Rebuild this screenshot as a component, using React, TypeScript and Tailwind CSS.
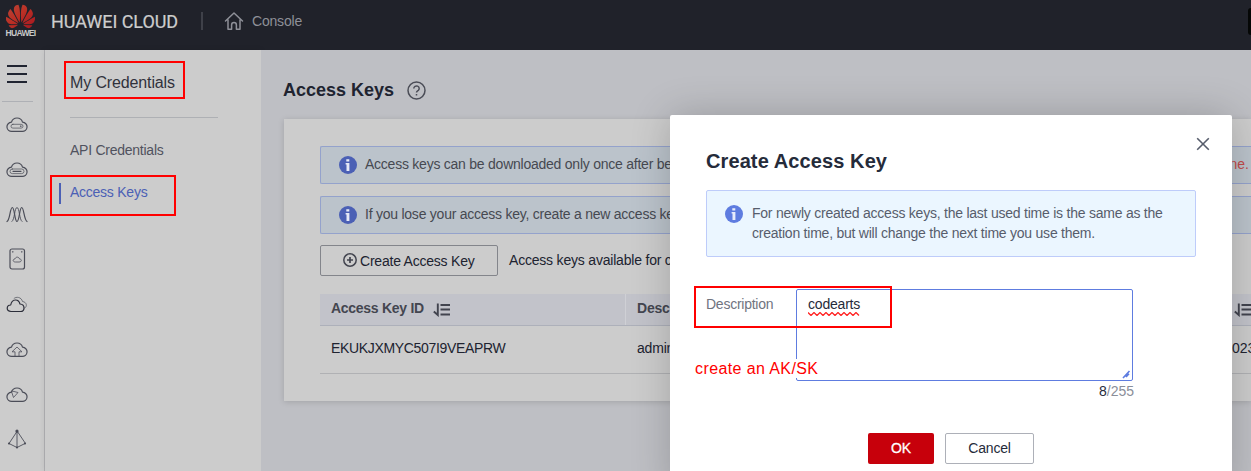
import React from "react";
import { SiHuawei } from "react-icons/si";

const CLOUD = "M6 15.4A4.8 4.6 0 0 1 5.5 6.2A5.7 5.7 0 0 1 16.5 6.2A4.8 4.6 0 0 1 16 15.4Z";

function RailIcon({ children }: { children: React.ReactNode }) {
  return (
    <div className="flex h-[45px] w-full items-center pl-[6px]">
      <svg className="overflow-visible" width="22" height="22" viewBox="0 -3 22 22" fill="none" stroke="#4b4d58" strokeWidth="1.2" strokeLinejoin="round" strokeLinecap="round">
        {children}
      </svg>
    </div>
  );
}

function Info({ color }: { color: string }) {
  return (
    <svg className="shrink-0" width="18" height="18" viewBox="0 0 18 18">
      <circle cx="9" cy="9" r="9" fill={color} />
      <path d="M7.3 3.3h3v2.3h-3zM6.6 7h3.8v8H7.5V8.6h-.9z" fill="#fff" fillOpacity=".86" />
    </svg>
  );
}

function SortIcon() {
  return (
    <svg width="18" height="14" viewBox="0 0 18 14" fill="none" stroke="#42444f" strokeWidth="1.9">
      <path d="M4.800 .5V12L.8 8.500M7.500 2h9.500M7.500 6.500h9.500M7.500 11.500h9.500" />
    </svg>
  );
}

function Header() {
  return (
    <header className="flex h-[50px] shrink-0 bg-[#20222a]">
      <div className="flex w-[41px] flex-col items-center pt-[1px]">
        <svg width="0" height="0" className="absolute">
          <defs>
            <linearGradient id="petal" x1="0" y1="0" x2="1" y2="1">
              <stop offset="0" stopColor="#b94436" />
              <stop offset="0.45" stopColor="#bb3025" />
              <stop offset="1" stopColor="#a51620" />
            </linearGradient>
          </defs>
        </svg>
        <SiHuawei className="h-[31px] w-[29px]" preserveAspectRatio="none" fill="url(#petal)" />
        <span className="-mt-[4px] font-['Liberation_Sans'] text-[8.5px] leading-[10px] font-bold tracking-[-0.65px] text-[#c9c9c9]">HUAWEI</span>
      </div>
      <div className="flex h-[41px] items-center pl-[10px]">
        <span className="w-[150px] pt-[2px] font-[Roboto] text-[18px] tracking-[-0.05px] text-[#cdcdcd] [-webkit-text-stroke:0.2px_#cdcdcd]">HUAWEI CLOUD</span>
        <span className="h-[18px] w-[2px] bg-[#3f4149]" />
        <svg className="ml-[21px]" width="20" height="20" viewBox="0 0 20 20" fill="none" stroke="#8e9098" strokeWidth="1.5" strokeLinejoin="round" strokeLinecap="round">
          <path d="M1.500 10L10 2l8.500 8M4 8.500v9.700h3.600v-4.200a2.300 2.300 0 0 1 4.800 0v4.200H16V8.500" />
        </svg>
        <span className="ml-[8px] text-[14px] leading-[20px] tracking-[-0.2px] text-[#8e9098]">Console</span>
      </div>
      <div className="mt-[8px] ml-auto h-[27px] w-[3px] rounded-l bg-[#050706]" />
    </header>
  );
}

function Rail() {
  return (
    <div className="flex w-[45px] shrink-0 flex-col border-r border-[#b0b0b3] bg-[#ccc]">
      <div className="mt-[15px] ml-[7px] flex w-[20px] flex-col gap-[6px]">
        <div className="h-[2px] bg-[#202431]" />
        <div className="h-[2px] bg-[#202431]" />
        <div className="h-[2px] bg-[#202431]" />
      </div>
      <div className="mt-[18px] -mb-px ml-[2px] h-px w-[31px] shrink-0 bg-[#aeb0b5]" />
      <RailIcon>
        <path d={CLOUD} />
        <rect x="5" y="8.300" width="12" height="3.800" rx="1.900" strokeWidth=".7" />
        <path d="M14.500 10.200h.5" />
      </RailIcon>
      <RailIcon>
        <path d={CLOUD} />
        <rect x="4" y="8" width="14" height="4.600" rx="2.300" strokeWidth=".7" />
        <path d="M7 10.300h8" />
      </RailIcon>
      <RailIcon>
        <path d="M1 15.500C4 14 4 1.500 6.300 1.500S8.600 15.500 11 15.500 13.500 1.500 15.700 1.500 18 14 21 15.500" />
        <path strokeWidth=".9" d="M6 15.500C8.700 14 8.500 1.500 11 1.500S13.300 14 16 15.500" />
      </RailIcon>
      <RailIcon>
        <rect x="4" y="-2" width="14.500" height="20" rx="2" />
        <path d="M6.500 .8h.5M15.500 .8h.5" />
        <path strokeWidth=".8" d="M9 11C6.500 11 6.500 8 9 8C9.500 5.500 13 5.500 13.500 8C16 8 16 11 13.500 11Z" />
      </RailIcon>
      <RailIcon>
        <path stroke="#2b2d39" d="M5 15.500C-.2 15.500 .2 9.200 4.700 9C6 2.500 12.500 2.500 14 8C19.500 8.500 19 15.500 14.500 15.500Z" />
        <path strokeWidth=".7" d="M8 2.500C10 .2 15.500 1 16.500 5.500C21 6 21.500 11 18.500 12.200" />
      </RailIcon>
      <RailIcon>
        <path d={CLOUD} />
        <path strokeWidth=".8" d="M9 15.500v-4.700H6L11 6l5 4.800h-3v4.700" />
      </RailIcon>
      <RailIcon>
        <path d={CLOUD} />
        <path strokeWidth=".8" d="M5.500 5.500L7.500 11.500L12 6.500L6 5Z" />
      </RailIcon>
      <RailIcon>
        <path strokeWidth=".9" d="M11 .5L3 12.500L11 16.500L19 12.500ZM11 .5v16" />
        <circle cx="11" cy=".2" r="1" fill="#30323d" />
        <circle cx="3" cy="12.500" r=".5" />
        <circle cx="19" cy="12.500" r=".5" />
        <circle cx="11" cy="16.500" r=".5" />
      </RailIcon>
    </div>
  );
}

function Sidebar() {
  return (
    <nav className="w-[216px] shrink-0 bg-[#ccc] pl-[25px] shadow-[0_0_6px_rgba(0,0,0,0.09)]">
      <h2 className="mt-[21px] text-[16px] leading-[24px] tracking-[-0.13px] text-[#30323c]">My Credentials</h2>
      <div className="mt-[22px] h-px w-[148px] bg-[#aeb0b4]" />
      <div className="mt-[22px] text-[14px] leading-[20px] tracking-[-0.25px] text-[#50525e]">API Credentials</div>
      <div className="mt-[23px] -ml-[11px] flex h-[21px] border-l-2 border-[#4b60b5] pl-[9px] text-[14px] leading-[18px] tracking-[-0.25px] text-[#4b60b5]">Access Keys</div>
    </nav>
  );
}

function Alert({ text, end }: { text: string; end?: string }) {
  return (
    <div className="flex h-[38px] overflow-hidden rounded-l-[2px] border border-r-0 border-[#94a2cc] bg-[#bbc3cb] pt-[9px] pl-[18px]">
      <Info color="#4b60b5" />
      <span className="ml-[8px] text-[14px] leading-[16px] tracking-[-0.24px] whitespace-nowrap text-[#464951]">{text}</span>
      {end && <span className="mr-[2px] ml-auto text-[14px] leading-[16px] text-[#c24b4b]">{end}</span>}
    </div>
  );
}

function Main() {
  return (
    <main className="min-w-0 flex-1 bg-[#bebfc4] pl-[23px]">
      <div className="flex h-[69px] items-center pt-[11px]">
        <h1 className="-ml-px text-[18px] leading-[24px] font-bold text-[#202330]">Access Keys</h1>
        <svg className="ml-[13px]" width="19" height="19" viewBox="0 0 19 19" fill="none" stroke="#4b4d57" strokeWidth="1.500">
          <circle cx="9.500" cy="9.500" r="8.500" />
          <path d="M6.800 7.400a2.700 2.500 0 1 1 4.500 1.900C10.200 10 9.500 10.200 9.500 11.600M9.500 13v1.500" />
        </svg>
      </div>
      <section className="h-[282px] bg-[#ccc] pt-[27px] pl-[36px] shadow-[0_1px_6px_rgba(0,0,0,0.15)]">
        <Alert text="Access keys can be downloaded only once after being" end="ne." />
        <div className="h-[12px]" />
        <Alert text="If you lose your access key, create a new access key" />
        <div className="mt-[11px] flex h-[31px]">
          <button className="flex h-[31px] w-[178px] items-center rounded-[2px] border border-[#83858b] pl-[22px] text-[14px] text-[#202330]">
            <svg className="-mt-[2px]" width="14" height="14" viewBox="0 0 14 14" fill="none" stroke="#42444f" strokeWidth="1.500">
              <circle cx="7" cy="7" r="6.200" />
              <path strokeWidth="1.700" d="M7 4v6M4 7h6" />
            </svg>
            <span className="ml-[3px] pt-px leading-[20px] tracking-[-0.22px]">Create Access Key</span>
          </button>
          <span className="ml-[11px] text-[14px] leading-[30px] tracking-[-0.2px] whitespace-nowrap text-[#202330]">Access keys available for creation</span>
        </div>
        <div className="mt-[18px] flex h-[32px] border-b border-[#adb0ba] bg-[#c2c3ca] text-[14px] font-bold text-[#444650]">
          <div className="flex w-[306px] border-r border-[#cfd0d5] pl-[11px] leading-[28px] tracking-[-0.28px]">
            Access Key ID
            <span className="mt-[9px] ml-[9px]"><SortIcon /></span>
          </div>
          <div className="flex-1 pl-[11px] leading-[28px] tracking-[-0.2px]">Description</div>
          <div className="mt-[9px] w-[17px] overflow-hidden"><SortIcon /></div>
        </div>
        <div className="flex h-[48px] border-b border-[#b0b1b4] text-[14px] leading-[45px] text-[#202330]">
          <div className="w-[317px] pl-[11px] tracking-[-0.33px]">EKUKJXMYC507I9VEAPRW</div>
          <div className="flex-1 tracking-[-0.2px]">admin</div>
          <div className="w-[19px] overflow-hidden">023</div>
        </div>
      </section>
    </main>
  );
}

function Dialog() {
  return (
    <div className="absolute top-[115px] left-[670px] h-[380px] w-[562px] rounded-[2px] bg-white px-[36px] shadow-[0_0_40px_rgba(0,0,0,0.2)]">
      <div className="flex h-[75px] justify-between pt-[34px]">
        <h2 className="text-[20px] leading-[24px] font-bold tracking-[0.1px] text-[#252b3a]">Create Access Key</h2>
        <svg className="-mt-[12px] -mr-[14px]" width="14" height="14" viewBox="0 0 14 14" stroke="#575d6c" strokeWidth="1.600">
          <path d="M1.200 1.200l11.600 11.600M12.800 1.200L1.200 12.800" />
        </svg>
      </div>
      <div className="flex h-[67px] rounded-[2px] border border-[#beccfa] bg-[#ebf6ff] pt-[14px] pl-[18px]">
        <Info color="#5e7ce0" />
        <p className="-mt-[2px] ml-[9px] text-[14px] leading-[20px] tracking-[-0.232px] whitespace-nowrap text-[#575d6c]">
          For newly created access keys, the last used time is the same as the<br />creation time, but will change the next time you use them.
        </p>
      </div>
      <div className="mt-[32px] flex">
        <label className="w-[90px] pt-[5px] text-[14px] leading-[20px] tracking-[-0.25px] text-[#70747f]">Description</label>
        <div className="flex h-[92px] w-[337px] items-end justify-between rounded-[2px] border border-[#5e7ce0] p-[1px]">
          <div className="h-full pt-[3px] pl-[10px] text-[14px] leading-[20px] tracking-[-0.2px] text-[#252b3a]">
            codearts
            <svg className="-mt-[2px]" width="53" height="4" viewBox="0 0 53 4" fill="none" stroke="#f22" strokeWidth="1.300">
              <path d="M0 .5l3 3 3-3 3 3 3-3 3 3 3-3 3 3 3-3 3 3 3-3 3 3 3-3 3 3 3-3 3 3 3-3 3 3" />
            </svg>
          </div>
          <svg width="9" height="9" viewBox="0 0 9 9" stroke="#5e7ce0" strokeWidth="1.600">
            <path d="M1 8l6.500-7M4 7l3-3.300" />
          </svg>
        </div>
      </div>
      <div className="w-[428px] text-right text-[14px] leading-[20px] text-[#8a8e99]"><span className="text-[#252b3a]">8</span>/255</div>
      <div className="mt-[32px] flex gap-[11px] pl-[162px]">
        <button className="h-[31px] w-[66px] rounded-[2px] bg-[#c7000b] text-[14px] text-white [-webkit-text-stroke:0.3px_white]">OK</button>
        <button className="h-[31px] w-[89px] rounded-[2px] border border-[#adb0b8] text-[14px] tracking-[-0.2px] text-[#252b3a]">Cancel</button>
      </div>
    </div>
  );
}

export default function App() {
  return (
    <div className="relative flex h-[471px] w-[1251px] flex-col overflow-hidden font-['Liberation_Sans',Arial,sans-serif]">
      <Header />
      <div className="flex min-h-0 flex-1">
        <Rail />
        <Sidebar />
        <Main />
      </div>
      <Dialog />
      <div className="absolute top-[61px] left-[64px] h-[38px] w-[121px] border-2 border-[#f00]" />
      <div className="absolute top-[175px] left-[50px] h-[41px] w-[126px] border-2 border-[#f00]" />
      <div className="absolute top-[286px] left-[694px] h-[42px] w-[198px] border-2 border-[#f00]" />
      <div className="absolute top-[359px] left-[695px] bg-white text-[16px] leading-[19px] tracking-[0.400px] text-[#f00]">create an AK/SK</div>
    </div>
  );
}
